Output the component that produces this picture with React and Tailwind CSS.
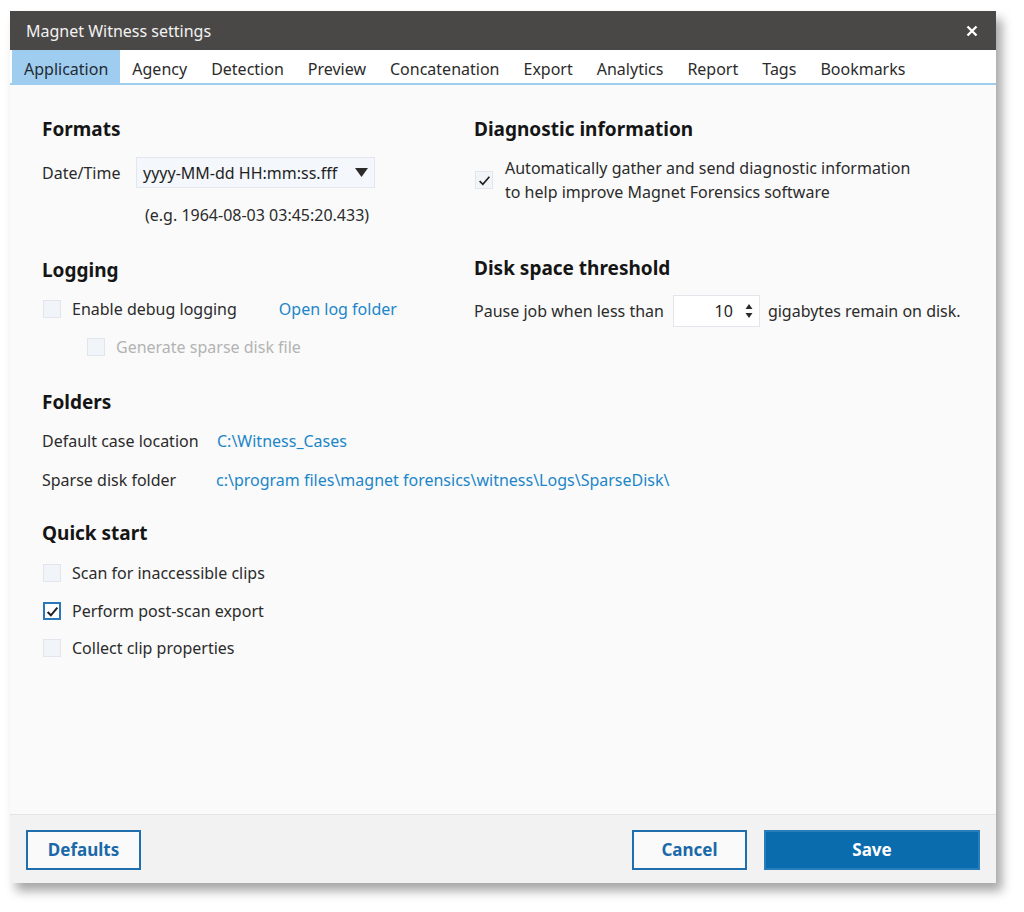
import React from 'react';

const tabs = ['Application', 'Agency', 'Detection', 'Preview', 'Concatenation', 'Export', 'Analytics', 'Report', 'Tags', 'Bookmarks'];

function Check({ checked, accent, className = '' }) {
  return (
    <span
      className={
        'flex h-[18px] w-[18px] shrink-0 items-center justify-center ' +
        (accent ? 'border-2 border-[#2a78b8] bg-white ' : 'border border-[#e2e6ec] bg-[#f1f4f9] ') +
        className
      }
    >
      {checked && (
        <svg width="13" height="13" viewBox="0 0 12 12">
          <path d="M1.5 6.5 L4.5 9.5 L10.5 2.5" fill="none" stroke="#1f1f1f" strokeWidth={accent ? 1.8 : 1.6} />
        </svg>
      )}
    </span>
  );
}

function Heading({ children, className = '' }) {
  return <h3 className={'text-[19px] font-bold leading-[24px] text-[#151515] ' + className}>{children}</h3>;
}

export default function App() {
  return (
    <div className="min-h-[912px] bg-white pl-[10px] pt-[11px] font-['Noto_Sans','Open_Sans',sans-serif] text-[16px] text-[#2b2b2b]">
      <div className="flex h-[872px] w-[986px] flex-col bg-[#fafafa] shadow-[6px_8px_10px_rgba(0,0,0,0.35)]">
        {/* Title bar */}
        <div className="flex h-[39px] items-center justify-between bg-[#4a4846] pl-[16px] pr-[18px]">
          <span className="text-[16px] text-[#f2f2f2]">Magnet Witness settings</span>
          <svg width="12" height="12" viewBox="0 0 12 12">
            <path d="M1.5 1.5 L10.5 10.5 M10.5 1.5 L1.5 10.5" stroke="#fff" strokeWidth="2.4" />
          </svg>
        </div>

        {/* Tabs */}
        <div className="flex h-[35px] border-b-2 border-[#9fcdf0] bg-white pl-[2px]">
          {tabs.map((t, i) => (
            <div
              key={t}
              className={
                'flex items-center px-[12px] pt-[5px] leading-none ' +
                (i === 0 ? 'bg-[#9fcdf0] text-[#1f2a33]' : 'text-[#2b2b2b]')
              }
            >
              {t}
            </div>
          ))}
        </div>

        {/* Content */}
        <div className="flex-1 pl-[32px] pt-[32px]">
          <div className="grid grid-cols-[432px_1fr]">
            <div>
              <Heading>Formats</Heading>
              <div className="mt-[16px] flex items-center">
                <span className="w-[94px]">Date/Time</span>
                <div className="flex h-[31px] w-[239px] items-center justify-between border border-[#e3e6ea] bg-[#f4f7fb] pl-[6px] pr-[6px]">
                  <span className="text-[#1f1f1f]">yyyy-MM-dd HH:mm:ss.fff</span>
                  <svg width="13" height="10" viewBox="0 0 13 10">
                    <path d="M0 0 H13 L6.5 9 Z" fill="#2b2b2b" />
                  </svg>
                </div>
              </div>
              <div className="mt-[15px] pl-[103px] leading-[24px]">(e.g. 1964-08-03 03:45:20.433)</div>

              <Heading className="mt-[31px]">Logging</Heading>
              <div className="mt-[15px] flex h-[24px] items-center">
                <Check className="ml-[1px]" />
                <span className="ml-[11px]">Enable debug logging</span>
                <span className="ml-[42px] text-[#1c86c9]">Open log folder</span>
              </div>
              <div className="mt-[14px] flex h-[24px] items-center pl-[45px]">
                <Check />
                <span className="ml-[11px] text-[#b3b3b3]">Generate sparse disk file</span>
              </div>
            </div>

            <div>
              <Heading>Diagnostic information</Heading>
              <div className="mt-[15px] flex items-center">
                <Check checked className="ml-[1px]" />
                <div className="ml-[12px] leading-[24px]">
                  Automatically gather and send diagnostic information
                  <br />
                  to help improve Magnet Forensics software
                </div>
              </div>

              <Heading className="mt-[52px]">Disk space threshold</Heading>
              <div className="mt-[15px] flex items-center">
                <span>Pause job when less than</span>
                <div className="ml-[9px] flex h-[32px] w-[87px] items-center justify-end border border-[#e3e6ea] bg-white pr-[6px]">
                  <span className="text-[#1f1f1f]">10</span>
                  <svg className="ml-[12px]" width="8" height="18" viewBox="0 0 8 18">
                    <path d="M4 2 L7.5 7 H0.5 Z M0.5 11 H7.5 L4 16 Z" fill="#2b2b2b" />
                  </svg>
                </div>
                <span className="ml-[8px]">gigabytes remain on disk.</span>
              </div>
            </div>
          </div>

          <Heading className="mt-[31px]">Folders</Heading>
          <div className="mt-[15px] flex h-[24px] items-center">
            <span className="w-[175px]">Default case location</span>
            <span className="text-[#1c86c9]">C:\Witness_Cases</span>
          </div>
          <div className="mt-[15px] flex h-[24px] items-center">
            <span className="w-[174px]">Sparse disk folder</span>
            <span className="text-[#1c86c9]">c:\program files\magnet forensics\witness\Logs\SparseDisk\</span>
          </div>

          <Heading className="mt-[29px]">Quick start</Heading>
          <div className="mt-[16px] flex h-[24px] items-center">
            <Check className="ml-[1px]" />
            <span className="ml-[11px]">Scan for inaccessible clips</span>
          </div>
          <div className="mt-[14px] flex h-[24px] items-center">
            <Check checked accent className="ml-[1px]" />
            <span className="ml-[11px]">Perform post-scan export</span>
          </div>
          <div className="mt-[13px] flex h-[24px] items-center">
            <Check className="ml-[1px]" />
            <span className="ml-[11px]">Collect clip properties</span>
          </div>
        </div>

        {/* Footer */}
        <div className="flex h-[69px] items-start border-t border-[#e4e4e4] bg-[#f2f2f2] px-[16px] pt-[15px]">
          <button className="h-[40px] w-[115px] border-2 border-[#1f6fae] bg-[#fafafa] text-[17px] font-bold text-[#1a69a8]">
            Defaults
          </button>
          <div className="flex-1" />
          <button className="h-[40px] w-[115px] border-2 border-[#1f6fae] bg-[#fafafa] text-[17px] font-bold text-[#1a69a8]">
            Cancel
          </button>
          <button className="ml-[17px] h-[40px] w-[216px] border-2 border-[#2a7dbb] bg-[#0b6cad] text-[17px] font-bold text-white">
            Save
          </button>
        </div>
      </div>
    </div>
  );
}
